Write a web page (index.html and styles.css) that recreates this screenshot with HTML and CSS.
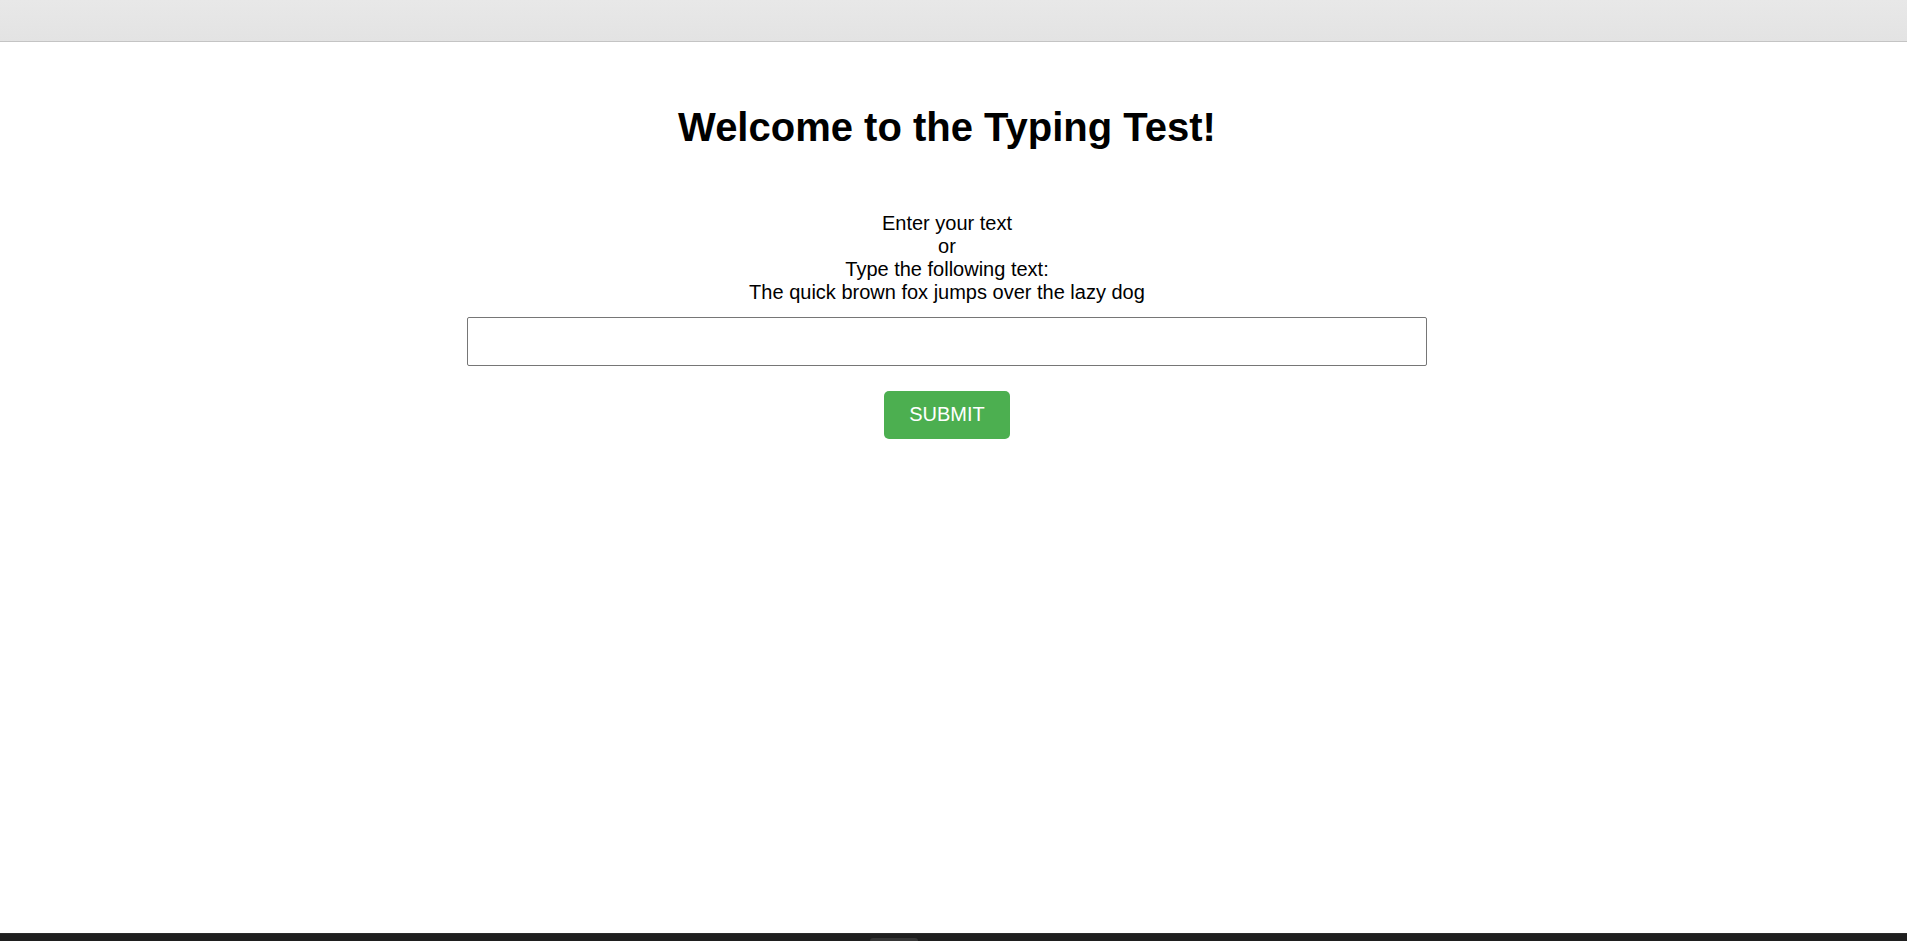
FILE: index.html
```html
<!DOCTYPE html>
<html lang="en">
<head>
<meta charset="utf-8">
<title>Typing Test</title>
<link rel="stylesheet" href="styles.css">
</head>
<body>
<div class="page">
  <div class="topbar"></div>
  <main class="main">
    <h1 class="title">Welcome to the Typing Test!</h1>
    <form class="form">
      <label class="prompt" for="typed">Enter your text<br>or<br>Type the following text:<br>The quick brown fox jumps over the lazy dog</label>
      <input class="field" id="typed" type="text">
      <button class="submit" type="button">SUBMIT</button>
    </form>
  </main>
  <div class="bottombar"><span class="tab"></span></div>
</div>
</body>
</html>
```
FILE: styles.css
```css
html, body {
  margin: 0;
  padding: 0;
  height: 100%;
}

body {
  font-family: "Liberation Sans", Arial, sans-serif;
  font-size: 20px;
  color: #000;
  background: #fff;
}

.page {
  display: flex;
  flex-direction: column;
  height: 100vh;
  overflow: hidden;
}

.topbar {
  flex: 0 0 41px;
  background: linear-gradient(#e8e8e8, #e3e3e3);
  border-bottom: 1px solid #c4c4c4;
}

.main {
  flex: 1 1 auto;
  display: flex;
  flex-direction: column;
  align-items: center;
  padding-right: 13px;
}

.title {
  margin: 62px 0 62px;
  font-size: 40px;
  font-weight: bold;
  line-height: 46px;
}

.form {
  display: flex;
  flex-direction: column;
  align-items: center;
}

.prompt {
  text-align: center;
  line-height: 23px;
}

.field {
  box-sizing: border-box;
  width: 960px;
  height: 49px;
  margin-top: 13px;
  border: 1px solid #767676;
  border-radius: 2px;
  font-family: inherit;
  font-size: 20px;
  padding: 0 10px;
  background: #fff;
}

.submit {
  margin-top: 25px;
  padding: 11px 25px 13px;
  line-height: 24px;
  font-family: inherit;
  font-size: 20px;
  color: #fff;
  background: #4caf50;
  border: none;
  border-radius: 5px;
}

.bottombar {
  flex: 0 0 8px;
  background: #1f1f1f;
  border-top: 1px solid #2c2c2c;
  display: flex;
  justify-content: center;
  align-items: flex-end;
  box-sizing: border-box;
}

.tab {
  width: 48px;
  height: 3px;
  margin-right: 120px;
  background: #363636;
  border-radius: 3px 3px 0 0;
}
```
